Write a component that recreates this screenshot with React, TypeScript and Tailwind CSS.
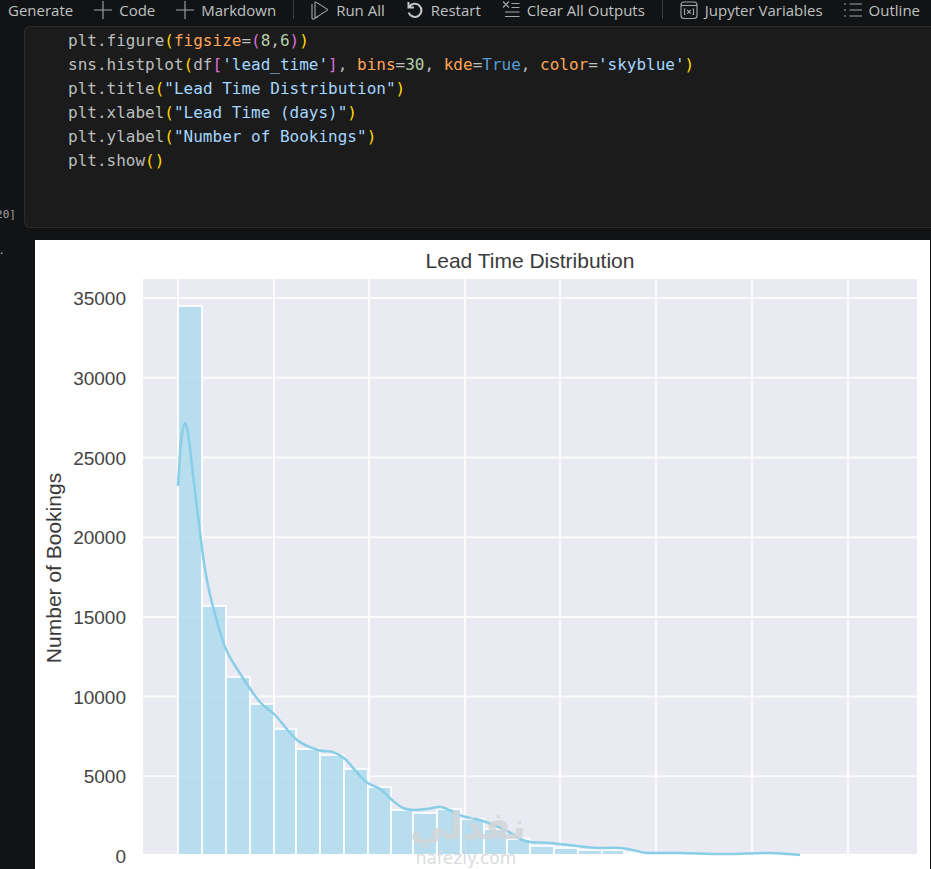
import type { ReactNode } from "react";

const icons = {
  add: (
    <path d="M9 0v18M0 9h18" strokeWidth="1.1" />
  ),
  runAll: (
    <>
      <path d="M4 1.8v14a.7.7 0 0 0 1.100.6l11-7a.8.8 0 0 0 0-1.300l-11-7A.7.7 0 0 0 4 1.800z" strokeWidth="1.1" />
      <path d="M1 3v14c0 .9.9 1.400 1.700.9l4.500-2.500" strokeWidth="1.1" />
    </>
  ),
  restart: (
    <path d="M2.500 1v5.500H8M3 6.200a6.600 6.600 0 1 1-.4 5.300" stroke="#c4c6c8" strokeWidth="2" />
  ),
  clear: (
    <path d="M1 .5l6 6M7 .5l-6 6M9.500 2.500h8M9.500 6.500h8M3 11h14.500M3 15.500h14.500" strokeWidth="1.1" />
  ),
  variables: (
    <>
      <rect x="1" y="1" width="16" height="16.500" rx="3" strokeWidth="1.1" />
      <path d="M1 4.500h16" strokeWidth="1.1" />
      <path d="M5.500 8H4.500v5.500h1M12.500 8h1v5.500h-1M7.200 9l3.600 3.600M10.800 9l-3.600 3.600" strokeWidth="1.1" />
    </>
  ),
  outline: (
    <path d="M0 3h2M0 9h2M0 15h2M5.500 3H18M5.500 9H18M5.500 15H18" strokeWidth="1.1" />
  ),
};

function Icon({ name }: { name: keyof typeof icons }) {
  return (
    <svg
      width="18"
      height="19"
      viewBox="0 0 18 19"
      fill="none"
      stroke="currentColor"
      aria-hidden="true"
      className="shrink-0 text-[#a3a6a8]"
    >
      {icons[name]}
    </svg>
  );
}

function ToolButton({
  icon,
  children,
}: {
  icon?: keyof typeof icons;
  children: ReactNode;
}) {
  return (
    <button type="button" className="flex shrink-0 items-center gap-[7px] whitespace-nowrap">
      {icon && <Icon name={icon} />}
      {children}
    </button>
  );
}

function Separator() {
  return <span className="-mx-1 h-[19px] w-px shrink-0 bg-[#3c3e40]" />;
}

function Toolbar() {
  return (
    <header className="flex h-[26px] items-start gap-[21px] overflow-hidden pl-2 font-['Open_Sans','Noto_Sans',sans-serif] text-[15px] leading-[20px] text-[#bfc1c2]">
      <ToolButton>Generate</ToolButton>
      <ToolButton icon="add">Code</ToolButton>
      <ToolButton icon="add">Markdown</ToolButton>
      <Separator />
      <ToolButton icon="runAll">Run All</ToolButton>
      <ToolButton icon="restart">Restart</ToolButton>
      <ToolButton icon="clear">Clear All Outputs</ToolButton>
      <Separator />
      <ToolButton icon="variables">Jupyter Variables</ToolButton>
      <ToolButton icon="outline">Outline</ToolButton>
    </header>
  );
}

const tokenColors = {
  text: "text-[#bbbebf]",
  paren: "text-[#ffd700]",
  inner: "text-[#da70d6]",
  param: "text-[#ffa657]",
  string: "text-[#a5d6ff]",
  number: "text-[#b5cea8]",
  constant: "text-[#569cd6]",
};

type Token = [keyof typeof tokenColors, string];

const lines: Token[][] = [
  [
    ["text", "plt.figure"], ["paren", "("], ["param", "figsize"], ["text", "="],
    ["inner", "("], ["number", "8"], ["text", ","], ["number", "6"], ["inner", ")"], ["paren", ")"],
  ],
  [
    ["text", "sns.histplot"], ["paren", "("], ["text", "df"], ["inner", "["],
    ["string", "'lead_time'"], ["inner", "]"], ["text", ", "], ["param", "bins"], ["text", "="],
    ["number", "30"], ["text", ", "], ["param", "kde"], ["text", "="], ["constant", "True"],
    ["text", ", "], ["param", "color"], ["text", "="], ["string", "'skyblue'"], ["paren", ")"],
  ],
  [["text", "plt.title"], ["paren", "("], ["string", '"Lead Time Distribution"'], ["paren", ")"]],
  [["text", "plt.xlabel"], ["paren", "("], ["string", '"Lead Time (days)"'], ["paren", ")"]],
  [["text", "plt.ylabel"], ["paren", "("], ["string", '"Number of Bookings"'], ["paren", ")"]],
  [["text", "plt.show"], ["paren", "()"]],
];

function CodeCell() {
  return (
    <section className="flex">
      <div className="flex w-6 shrink-0 items-end justify-end overflow-hidden pr-2 pb-[5px] font-['DejaVu_Sans_Mono',monospace] text-[11px] leading-4 text-[#a0a2a4]">
        [20]
      </div>
      <pre className="min-w-0 flex-1 overflow-hidden rounded-l-md border border-r-0 border-[#2a2b2c] bg-[#1b1b1b] pt-[2px] pb-[54px] pl-[43px] font-['DejaVu_Sans_Mono',monospace] text-[16px] leading-6">
        <code className="font-['DejaVu_Sans_Mono',monospace]">
          {lines.map((line, i) => (
            <div key={i}>
              {line.map(([kind, value], j) => (
                <span key={j} className={tokenColors[kind]}>
                  {value}
                </span>
              ))}
            </div>
          ))}
        </code>
      </pre>
    </section>
  );
}

// left edge and top of every histogram bar
const bars = [
  [143, 66], [167, 366], [191, 437], [215, 464], [239, 489], [261, 509],
  [285, 515], [309, 529], [333, 547], [356, 570], [378, 573], [402, 569],
  [426, 579], [449, 589], [472, 599], [495, 606], [519, 608], [543, 610],
  [567, 610], [589, 613],
];

const kde = [
  [143, 246], [146, 202], [150, 183], [154, 200], [158, 235], [164, 284],
  [167, 308], [171, 335], [177, 363], [190, 407], [206, 435], [225, 462],
  [240, 475], [262, 500], [283, 510], [298, 512], [310, 519], [330, 541],
  [345, 549], [357, 560], [368, 568], [378, 570], [392, 569], [405, 567],
  [417, 571], [427, 576], [448, 581], [472, 591], [485, 599], [495, 602],
  [515, 603], [542, 606], [562, 608], [585, 608], [602, 611], [612, 613],
  [645, 613], [690, 614], [735, 613], [765, 615],
];

const yTicks = [35000, 30000, 25000, 20000, 15000, 10000, 5000, 0];
const xGrid = [143, 239, 334, 430, 525, 621, 717, 813];

function smoothPath(points: number[][]) {
  let d = `M${points[0].join(" ")}`;
  for (let i = 0; i < points.length - 1; i++) {
    const [x0, y0] = points[Math.max(i - 1, 0)];
    const [x1, y1] = points[i];
    const [x2, y2] = points[i + 1];
    const [x3, y3] = points[Math.min(i + 2, points.length - 1)];
    d += ` C${x1 + (x2 - x0) / 6} ${y1 + (y2 - y0) / 6} ${x2 - (x3 - x1) / 6} ${y2 - (y3 - y1) / 6} ${x2} ${y2}`;
  }
  return d;
}

function Histogram() {
  return (
    <svg
      viewBox="0 0 895 629"
      role="img"
      aria-label="Lead Time Distribution"
      className="block w-full bg-white font-['Liberation_Sans',Arial,sans-serif]"
    >
      <text x="495" y="28" fontSize="21" textAnchor="middle" fill="#3a3a3a">
        Lead Time Distribution
      </text>
      <text fontSize="21" textAnchor="middle" fill="#3a3a3a" transform="translate(26 328) rotate(-90)">
        Number of Bookings
      </text>

      <rect x="108" y="39" width="774" height="575" fill="#e9eaf2" />
      {xGrid.map((x) => (
        <path key={x} d={`M${x} 39V614`} stroke="#fff" strokeWidth="2" strokeOpacity="0.85" />
      ))}
      {yTicks.map((tick) => {
        const y = 616 - (tick / 5000) * 79.7;
        return (
          <g key={tick}>
            {tick > 0 && <path d={`M108 ${y}H882`} stroke="#fff" strokeWidth="2" strokeOpacity="0.85" />}
            <text x="91" y={y + 7} fontSize="19" textAnchor="end" fill="#444">
              {tick}
            </text>
          </g>
        );
      })}

      {bars.map(([x, top], i) => {
        const right = bars[i + 1]?.[0] ?? 612;
        return (
          <path
            key={x}
            d={`M${x} 614V${top}H${right}V614`}
            fill="#a5d8ec"
            fillOpacity="0.75"
            stroke="#fff"
            strokeWidth="2"
            strokeOpacity="0.85"
          />
        );
      })}
      <path d={smoothPath(kde)} fill="none" stroke="#87cee6" strokeWidth="2.5" />

      <g
        fill="#d3d6d9"
        fillOpacity="0.85"
        textAnchor="middle"
        className="font-['DejaVu_Sans',sans-serif]"
      >
        <text x="433" y="599" fontSize="38" fontWeight="700">
          نفذلي
        </text>
        <text x="431" y="624" fontSize="17">
          nafezly.com
        </text>
      </g>
    </svg>
  );
}

export default function App() {
  return (
    <main className="min-h-screen overflow-hidden bg-[#121314]">
      <Toolbar />
      <CodeCell />
      <section className="flex pt-3 pr-px">
        <div className="w-[35px] shrink-0 overflow-hidden pt-[3px] pr-[30px] font-['DejaVu_Sans_Mono',monospace] text-[11px] leading-4 text-[#a0a2a4]">
          <span className="flex justify-end">...</span>
        </div>
        <div className="min-w-0 flex-1">
          <Histogram />
        </div>
      </section>
    </main>
  );
}
